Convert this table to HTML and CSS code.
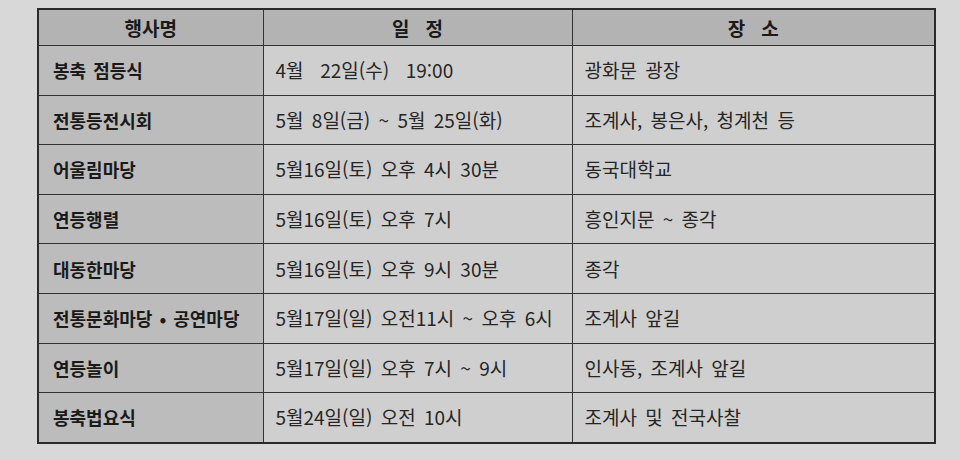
FILE: index.html
```html
<!DOCTYPE html>
<html lang="ko">
<head>
<meta charset="utf-8">
<link rel="stylesheet" href="styles.css">
</head>
<body>
<div class="page">
<table class="sched">
<colgroup><col class="c1"><col class="c2"><col class="c3"></colgroup>
<thead>
<tr><th>행사명</th><th>일&nbsp;&nbsp;&nbsp;정</th><th>장&nbsp;&nbsp;&nbsp;소</th></tr>
</thead>
<tbody>
<tr><td class="name">봉축 점등식</td><td>4월&nbsp; 22일(수)&nbsp; 19:00</td><td>광화문 광장</td></tr>
<tr><td class="name">전통등전시회</td><td>5월 8일(금) ~ 5월 25일(화)</td><td>조계사, 봉은사, 청계천 등</td></tr>
<tr><td class="name">어울림마당</td><td>5월16일(토) 오후 4시 30분</td><td>동국대학교</td></tr>
<tr><td class="name">연등행렬</td><td>5월16일(토) 오후 7시</td><td>흥인지문 ~ 종각</td></tr>
<tr><td class="name">대동한마당</td><td>5월16일(토) 오후 9시 30분</td><td>종각</td></tr>
<tr><td class="name">전통문화마당 • 공연마당</td><td>5월17일(일) 오전11시 ~ 오후 6시</td><td>조계사 앞길</td></tr>
<tr><td class="name">연등놀이</td><td>5월17일(일) 오후 7시 ~ 9시</td><td>인사동, 조계사 앞길</td></tr>
<tr><td class="name">봉축법요식</td><td>5월24일(일) 오전 10시</td><td>조계사 및 전국사찰</td></tr>
</tbody>
</table>
</div>
</body>
</html>
```
FILE: styles.css
```css
html, body { margin: 0; padding: 0; }
body {
  background: #d8d8d8;
  font-family: "Noto Sans CJK KR", "Noto Sans", sans-serif;
  color: #1e1e1e;
}
.page {
  width: 960px;
  height: 460px;
  padding: 8px 0 0 37px;
  box-sizing: border-box;
}
.sched {
  border-collapse: collapse;
  width: 897px;
  table-layout: fixed;
  border: 2px solid #2a2a2a;
}
.c1 { width: 225px; }
.c2 { width: 309px; }
.c3 { width: 363px; }
.sched th, .sched td {
  border: 1.5px solid #333;
  line-height: 22px;
  padding: 0;
}
.sched th {
  background: #b3b3b3;
  height: 35px;
  font-size: 19px;
  font-weight: 700;
  text-align: center;
  color: #1a1a1a;
}
.sched td {
  height: 48.6px;
  background: #cfcfcf;
  font-size: 19px;
  font-weight: 400;
  word-spacing: 3px;
  padding-left: 12px;
  color: #262626;
}
.sched td.name {
  background: #bcbcbc;
  font-size: 18px;
  font-weight: 700;
  word-spacing: 2px;
  padding-left: 14px;
  color: #1a1a1a;
}
```
